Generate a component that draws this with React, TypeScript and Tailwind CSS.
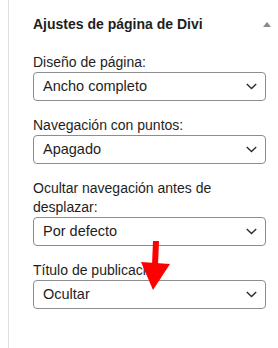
import React from 'react';

interface Field {
  label: string;
  value: string;
}

const fields: Field[] = [
  { label: 'Diseño de página:', value: 'Ancho completo' },
  { label: 'Navegación con puntos:', value: 'Apagado' },
  { label: 'Ocultar navegación antes de desplazar:', value: 'Por defecto' },
  { label: 'Título de publicación', value: 'Ocultar' },
];

const Chevron: React.FC = () => (
  <svg width="11" height="7" viewBox="0 0 11 7" fill="none" className="shrink-0">
    <path d="M0.8 1 L5.5 5.5 L10.2 1" stroke="#2c2c2c" strokeWidth="1.4" />
  </svg>
);

const SelectBox: React.FC<{ value: string }> = ({ value }) => (
  <div className="flex items-center justify-between h-[29px] border border-[#8d8d8d] rounded-[4px] pl-[9px] pr-[8px] bg-white">
    <span className="text-[14.5px] text-[#1e1e1e] leading-none">{value}</span>
    <Chevron />
  </div>
);

const App: React.FC = () => {
  return (
    <div
      className="relative h-[348px] w-[278px] bg-white overflow-hidden"
      style={{ fontFamily: '"Liberation Sans", Arial, sans-serif' }}
    >
      <div className="ml-2 h-full border-l border-[#e0e0e0] pl-6 pr-3 pt-[14px]">
        <div className="flex items-center justify-between h-5 -mr-[5px]">
          <h2 className="text-[14px] font-semibold text-[#1e1e1e] leading-5">Ajustes de página de Divi</h2>
          <span className="w-0 h-0 border-l-4 border-r-4 border-b-[5px] border-l-transparent border-r-transparent border-b-[#8a8a8a]" />
        </div>

        <div className="mt-[19px] flex flex-col gap-[15px]">
          {fields.map((field) => (
            <div key={field.label}>
              <label className="block text-[14px] leading-[19px] text-[#1e1e1e]">{field.label}</label>
              <SelectBox value={field.value} />
            </div>
          ))}
        </div>
      </div>

      {/* annotation arrow */}
      <svg className="absolute left-0 top-0 pointer-events-none" width="278" height="348" viewBox="0 0 278 348">
        <polygon points="153,241 159,241 158,265 152,265" fill="#ff0000" />
        <polygon points="141,262 170,264 153,290" fill="#ff0000" />
      </svg>
    </div>
  );
};

export default App;
